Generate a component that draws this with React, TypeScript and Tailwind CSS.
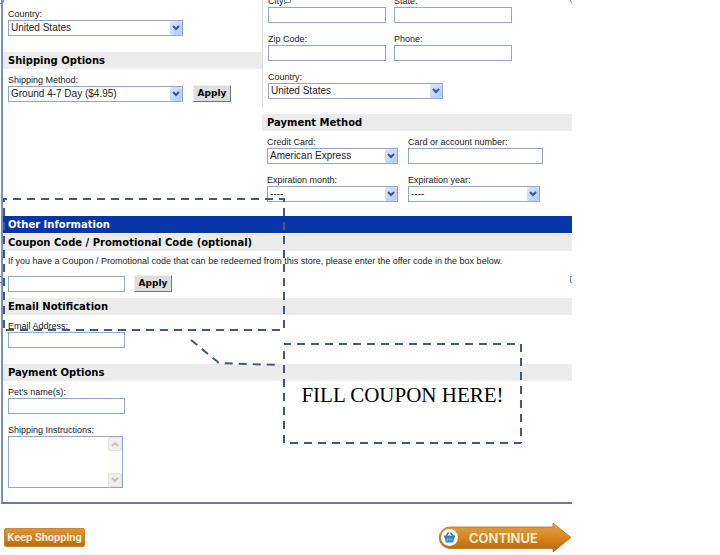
import type { ReactNode } from 'react'
import clsx from 'clsx'

interface FieldProps {
  id: string
  label: string
  className?: string
}

interface SelectFieldProps extends FieldProps {
  options: string[]
}

function Label({ id, children }: { id: string; children: ReactNode }) {
  return (
    <label htmlFor={id} className="block h-3 whitespace-nowrap text-[9px] leading-3 text-[#222]">
      {children}
    </label>
  )
}

function TextField({ id, label, className }: FieldProps) {
  return (
    <div className={className}>
      <Label id={id}>{label}</Label>
      <input id={id} type="text" className="block h-4 w-full border border-[#8fa9c6] bg-white px-1 text-[10px]" />
    </div>
  )
}

function SelectField({ id, label, options, className }: SelectFieldProps) {
  return (
    <div className={className}>
      <Label id={id}>{label}</Label>
      <div className="relative">
        <select
          id={id}
          className="block h-4 w-full appearance-none border border-[#8fa9c6] bg-white pl-[2px] text-[10px] leading-[14px] text-[#222]"
        >
          {options.map((o) => (
            <option key={o}>{o}</option>
          ))}
        </select>
        <span className="pointer-events-none absolute top-px right-px flex h-[14px] w-3 items-center justify-center rounded-[2px] bg-linear-to-br from-[#d9e5fd] to-[#b3c8f5]">
          <svg width="8" height="6" viewBox="0 0 8 6" fill="none" stroke="#3d5488" strokeWidth="2">
            <path d="M1 1l3 3 3-3" />
          </svg>
        </span>
      </div>
    </div>
  )
}

function SectionBar({ children, primary }: { children: ReactNode; primary?: boolean }) {
  return (
    <h2
      className={clsx(
        'h-[17px] whitespace-nowrap pl-[5px] font-["DejaVu_Sans"] text-[10px] leading-[17px] font-bold',
        primary ? 'bg-[#0835a8] text-white' : 'bg-[#ececec] text-black',
      )}
    >
      {children}
    </h2>
  )
}

function ApplyButton() {
  return (
    <button
      type="button"
      className='h-[17px] w-[38px] border border-t-[#eee] border-r-[#777] border-b-[#777] border-l-[#eee] bg-[#dedede] font-["DejaVu_Sans"] text-[9px] leading-[15px] font-bold text-black'
    >
      Apply
    </button>
  )
}

function ScrollArrow({ d }: { d: string }) {
  return (
    <span className="flex h-[14px] items-center justify-center rounded-[2px] border border-[#e4e2d8] bg-[#f1f0ea]">
      <svg width="8" height="6" viewBox="0 0 8 6" fill="none" stroke="#c3c2b8" strokeWidth="2">
        <path d={d} />
      </svg>
    </span>
  )
}

function ContinueButton() {
  return (
    <button type="button" className="relative flex h-[31px] w-[134px] items-center">
      <svg className="absolute inset-0" width="134" height="31" viewBox="0 0 134 31" aria-hidden="true">
        <defs>
          <linearGradient id="arrow" x1="0" y1="0" x2="0" y2="1">
            <stop offset="0" stopColor="#e2a04a" />
            <stop offset="0.5" stopColor="#d9861f" />
            <stop offset="1" stopColor="#b35f0c" />
          </linearGradient>
        </defs>
        <path d="M12 5H115V1L133 15.500L115 30V26.500H12A10.750 10.750 0 0 1 12 5Z" fill="url(#arrow)" stroke="#b8711f" strokeWidth="0.800" />
        <circle cx="11.500" cy="15.500" r="8.500" fill="#fff" />
        <path d="M8 14L10.500 10.500M15 14L12.500 10.500" stroke="#2f78bd" strokeWidth="1.300" />
        <path d="M6 13.500H17V15.500H16.300L15.300 20.500H7.700L6.700 15.500H6Z" fill="#3580c4" />
        <path d="M9.300 16V19.500M11.500 16V19.500M13.700 16V19.500M8 17.800H15" stroke="#8fc0e8" strokeWidth="0.600" />
      </svg>
      <span className="relative pl-[31px] font-[Inter] text-[13px] leading-4 font-semibold text-[#fff3dc]">CONTINUE</span>
    </button>
  )
}

/* Dashed marker round the coupon section, with its leader line and callout box */
function CouponCallout() {
  return (
    <div className="pointer-events-none absolute inset-0">
      <svg className="absolute inset-0" width="574" height="450" viewBox="0 0 574 450" fill="none" aria-hidden="true">
        <g stroke="#43597e" strokeWidth="2" strokeDasharray="8 6">
          <path d="M4 199H284" strokeDashoffset="5" />
          <path d="M284 198V330" strokeDashoffset="4" />
          <path d="M4 198V330" strokeDashoffset="4" />
          <path d="M6 330H284" />
          <path d="M191 340L219 363L279 365" />
          <path d="M284 344H521" strokeDashoffset="1" />
          <path d="M521 344V443" />
          <path d="M284 351V443" />
          <path d="M290 443H521" />
        </g>
        <g stroke="#6f8fb0">
          <path d="M0 3.500H2.500L3.500 2V0" />
          <path d="M284.500 0V2.500H290.500V0" />
          <path d="M570 0L572 3" />
          <path d="M0 276.500H2.500V282.500H0" />
          <path d="M572 276.500H570.500V282.500H572" />
        </g>
      </svg>
      <p className='absolute top-[345px] left-[284px] flex h-[100px] w-[237px] items-center justify-center whitespace-nowrap font-["Liberation_Serif"] text-[21px] leading-6 text-black'>
        FILL COUPON HERE!
      </p>
    </div>
  )
}

export default function App() {
  return (
    <div className='min-h-screen bg-white font-["Liberation_Sans",sans-serif]'>
      <main className="relative max-w-[572px] overflow-hidden">
        <form className="ml-px border-b-2 border-l-2 border-b-[#6377bd] border-l-[#7590c8] pb-[14px]">
          <div className="flex">
            {/* Shipping column */}
            <div className="w-[259px] shrink-0 pt-2">
              <SelectField id="ship-country" label="Country:" options={['United States']} className="mb-4 ml-[5px] w-[175px]" />
              <SectionBar>Shipping Options</SectionBar>
              <div className="mt-[5px] flex items-end gap-2.5 pl-[5px]">
                <SelectField id="ship-method" label="Shipping Method:" options={['Ground 4-7 Day ($4.95)']} className="w-[175px]" />
                <ApplyButton />
              </div>
            </div>

            {/* Billing column */}
            <div className="min-w-0 flex-1">
              <div className="border-l border-[#dcdcdc] pb-2 pl-[5px]">
                <div className="-mt-[5px] grid grid-cols-[118px_118px] gap-x-2 gap-y-2.5">
                  <TextField id="city" label="City:" />
                  <TextField id="state" label="State:" />
                  <TextField id="zip" label="Zip Code:" />
                  <TextField id="phone" label="Phone:" />
                  <SelectField id="bill-country" label="Country:" options={['United States']} className="col-span-2 w-[175px]" />
                </div>
              </div>
              <div className="mt-[7px]">
                <SectionBar>Payment Method</SectionBar>
                <div className="mt-[5px] grid grid-cols-[131px_135px] gap-x-2.5 gap-y-2.5 pl-[5px]">
                  <SelectField id="card" label="Credit Card:" options={['American Express']} />
                  <TextField id="card-number" label="Card or account number:" />
                  <SelectField id="exp-month" label="Expiration month:" options={['----']} />
                  <SelectField id="exp-year" label="Expiration year:" options={['----']} className="w-[132px]" />
                </div>
              </div>
            </div>
          </div>

          <div className="mt-[14px] flex flex-col gap-px">
            <SectionBar primary>Other Information</SectionBar>
            <SectionBar>Coupon Code / Promotional Code (optional)</SectionBar>
          </div>
          <div className="mb-1.5 pl-[5px]">
            <label htmlFor="coupon" className="mt-1 block text-[9px] leading-3 text-[#222]">
              If you have a Coupon / Promotional code that can be redeemed from this store, please enter the offer code in the box below.
            </label>
            <div className="mt-2 flex items-end gap-[9px]">
              <input id="coupon" type="text" className="block h-4 w-[117px] border border-[#8fa9c6] bg-white px-1 text-[10px]" />
              <ApplyButton />
            </div>
          </div>

          <SectionBar>Email Notification</SectionBar>
          <TextField id="email" label="Email Address:" className="mt-[5px] mb-4 ml-[5px] w-[117px]" />

          <SectionBar>Payment Options</SectionBar>
          <div className="mt-[5px] flex flex-col gap-2.5 pl-[5px]">
            <TextField id="pet" label="Pet's name(s):" className="w-[117px]" />
            <div className="w-[115px]">
              <Label id="instructions">Shipping Instructions:</Label>
              <div className="flex h-[52px] border border-[#8fa9c6]">
                <textarea id="instructions" className="min-w-0 flex-1 resize-none overflow-hidden px-1 text-[10px]" />
                <div className="flex w-[14px] flex-col justify-between bg-[#fcfcf8]">
                  <ScrollArrow d="M1 5l3-3 3 3" />
                  <ScrollArrow d="M1 1l3 3 3-3" />
                </div>
              </div>
            </div>
          </div>
        </form>

        <div className="mt-[18px] flex items-center justify-between pl-1">
          <button
            type="button"
            className="flex h-[19px] w-[81px] items-center justify-center rounded-[2px] border border-[#c98532] bg-linear-to-b from-[#dd9436] to-[#c06b0b] font-[Roboto] text-[11px] leading-4 font-semibold whitespace-nowrap text-[#fff3dc]"
          >
            Keep Shopping
          </button>
          <ContinueButton />
        </div>

        <CouponCallout />
      </main>
    </div>
  )
}
